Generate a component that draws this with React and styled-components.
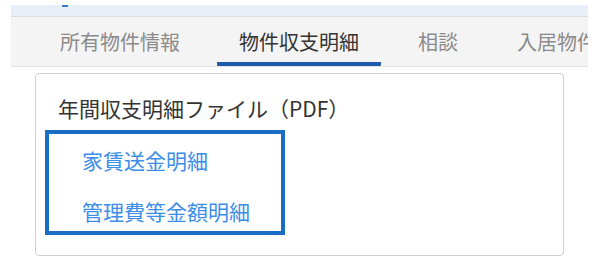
import React from "react";
import styled, { createGlobalStyle } from "styled-components";

const GlobalStyle = createGlobalStyle`
  body {
    margin: 0;
    background: #ffffff;
    font-family: "Noto Sans CJK JP", "Noto Sans", sans-serif;
  }
`;

const Page = styled.div`
  padding: 5px 7px 0 11px;
`;

const TopStrip = styled.div`
  height: 11px;
  background-color: #e9eff9;
  border-bottom: 1px solid #d6dce6;
  padding-left: 51px;
`;

const StripMark = styled.span`
  display: block;
  width: 6px;
  height: 2px;
  background-color: #3c78c8;
`;

const TabBar = styled.div`
  display: flex;
  gap: 15px;
  height: 49px;
  padding-left: 27px;
  background-color: #f4f4f4;
  border-bottom: 1px solid #e2e2e2;
  overflow: hidden;
`;

const Tab = styled.div`
  display: flex;
  align-items: center;
  box-sizing: border-box;
  height: 100%;
  padding: 4px 22px 0;
  border-bottom: 4px solid ${(p) => (p.$active ? "#1f5aae" : "transparent")};
  border-radius: 1px;
  font-size: 20px;
  white-space: nowrap;
  color: ${(p) => (p.$active ? "#333333" : "#8a8a8a")};
`;

const Card = styled.div`
  box-sizing: border-box;
  width: 529px;
  margin: 6px 0 0 24px;
  padding: 19px 22px 20px;
  border: 1px solid #cfcfcf;
  border-radius: 4px;
  background: #ffffff;
`;

const Title = styled.div`
  font-size: 21px;
  line-height: 30px;
  color: #333333;
`;

const LinkBox = styled.div`
  display: flex;
  flex-direction: column;
  gap: 21px;
  width: 240px;
  box-sizing: border-box;
  margin: 7px 0 0 -13px;
  padding: 11px 0 5px 33px;
  border: 4px solid #1a6dc4;
`;

const DocLink = styled.a`
  display: block;
  font-size: 21px;
  line-height: 30px;
  color: #3b8ee8;
  text-decoration: none;
  white-space: nowrap;
`;

const tabs = ["所有物件情報", "物件収支明細", "相談", "入居物件"];
const links = ["家賃送金明細", "管理費等金額明細"];

export default function App() {
  return (
    <Page>
      <GlobalStyle />
      <TopStrip>
        <StripMark />
      </TopStrip>
      <TabBar>
        {tabs.map((t, i) => (
          <Tab key={t} $active={i === 1}>
            {t}
          </Tab>
        ))}
      </TabBar>
      <Card>
        <Title>年間収支明細ファイル（PDF）</Title>
        <LinkBox>
          {links.map((l) => (
            <DocLink key={l} href="#">
              {l}
            </DocLink>
          ))}
        </LinkBox>
      </Card>
    </Page>
  );
}
